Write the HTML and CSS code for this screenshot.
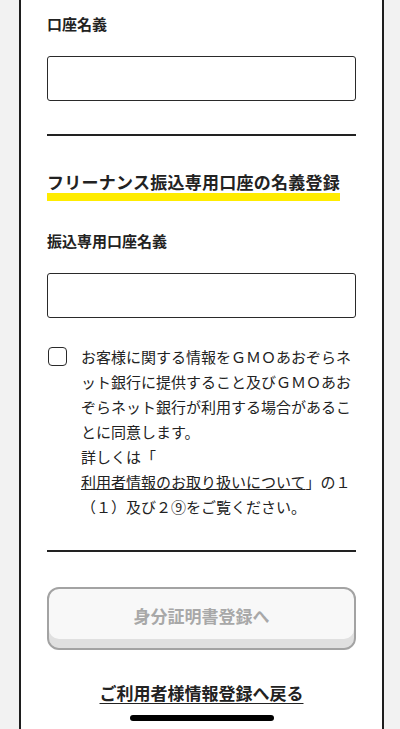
FILE: index.html
```html
<!DOCTYPE html>
<html lang="ja">
<head>
<meta charset="utf-8">
<meta name="viewport" content="width=device-width, initial-scale=1">
<title>振込専用口座の名義登録</title>
<link rel="stylesheet" href="styles.css">
</head>
<body>
<main class="panel">
  <label class="field-label" for="account-name">口座名義</label>
  <input class="text-input" id="account-name" type="text">

  <hr class="divider divider-first">

  <h2 class="section-title"><span class="marker">フリーナンス振込専用口座の名義登録</span></h2>

  <label class="field-label field-label-second" for="transfer-name">振込専用口座名義</label>
  <input class="text-input" id="transfer-name" type="text">

  <div class="consent">
    <span class="checkbox" aria-hidden="true"></span>
    <p class="consent-text">お客様に関する情報をＧＭＯあおぞらネット銀行に提供すること及びＧＭＯあおぞらネット銀行が利用する場合があることに同意します。<br>詳しくは「<a class="consent-link" href="#">利用者情報のお取り扱いについて</a>」の１（１）及び２⑨をご覧ください。</p>
  </div>

  <hr class="divider divider-second">

  <button class="next-button" type="button" disabled>身分証明書登録へ</button>

  <div class="back-row">
    <a class="back-link" href="#">ご利用者様情報登録へ戻る</a>
  </div>
</main>
<div class="home-indicator"></div>
</body>
</html>
```

FILE: styles.css
```css
html, body {
  margin: 0;
  padding: 0;
}

body {
  background: #f2f2f2;
  font-family: "Noto Sans CJK JP", "Noto Sans", sans-serif;
  color: #222;
}

.panel {
  box-sizing: border-box;
  width: 365px;
  min-height: 729px;
  margin-left: 19px;
  padding: 14px 26px 40px;
  background: #fff;
  border-left: 2px solid #1e1e1e;
  border-right: 2px solid #1e1e1e;
  display: flex;
  flex-direction: column;
}

.field-label {
  display: block;
  font-size: 15px;
  font-weight: bold;
  line-height: 20px;
}

.field-label-second {
  margin-top: 30px;
}

.text-input {
  display: block;
  box-sizing: border-box;
  width: 100%;
  height: 45px;
  margin: 22px 0 0;
  border: 1px solid #2a2a2a;
  border-radius: 3px;
  background: #fff;
  font: inherit;
}

.divider {
  margin: 0;
  border: none;
  height: 2px;
  background: #222;
}

.divider-first {
  margin-top: 33px;
}

.divider-second {
  margin-top: 31px;
}

.section-title {
  margin: 35px 0 0;
  font-size: 17px;
  font-weight: bold;
  line-height: 22px;
  letter-spacing: 0.25px;
}

.marker {
  display: inline-block;
  padding-bottom: 8px;
  background: linear-gradient(to bottom, transparent calc(100% - 8px), #ffec00 calc(100% - 8px));
}

.consent {
  display: flex;
  align-items: flex-start;
  gap: 14px;
  margin-top: 26px;
}

.checkbox {
  flex: none;
  box-sizing: border-box;
  width: 19px;
  height: 19px;
  margin-top: 3px;
  margin-left: 1px;
  border: 1.5px solid #2a2a2a;
  border-radius: 4px;
  background: #fff;
}

.consent-text {
  margin: 0;
  font-size: 15px;
  line-height: 25px;
}

.consent-link {
  display: inline-block;
  color: #222;
  text-decoration: underline;
}

.next-button {
  display: block;
  box-sizing: border-box;
  width: 100%;
  height: 63px;
  margin-top: 35px;
  padding: 0 0 6px;
  border: 2px solid #a3a3a3;
  border-radius: 12px;
  background: #f8f8f8;
  box-shadow: inset 0 -9px 0 #e0e0e0;
  font-family: inherit;
  font-size: 17px;
  font-weight: bold;
  color: #a8a8a8;
}

.back-row {
  margin-top: 31px;
  text-align: center;
}

.back-link {
  font-size: 17px;
  font-weight: bold;
  line-height: 24px;
  color: #222;
  text-decoration: underline;
  text-underline-offset: 3px;
}

.home-indicator {
  position: fixed;
  left: 130px;
  bottom: 8px;
  width: 144px;
  height: 6px;
  border-radius: 3px;
  background: #000;
}
```
